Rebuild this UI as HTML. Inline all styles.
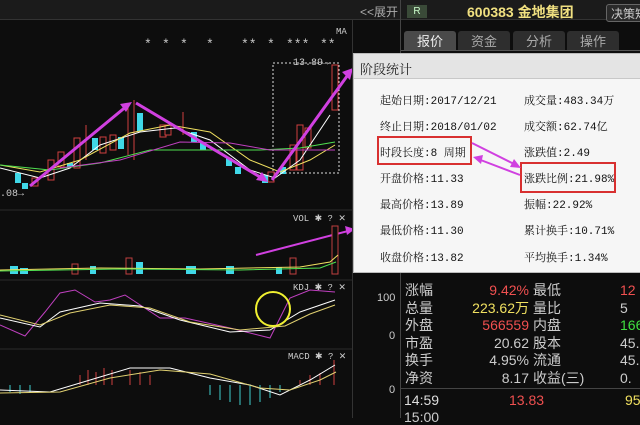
<!DOCTYPE html><html><head><meta charset="utf-8"><style>
*{margin:0;padding:0;box-sizing:border-box}
body{width:640px;height:418px;overflow:hidden;background:#0d0d0d;position:relative;font-family:"Liberation Sans","Noto Sans CJK SC",sans-serif;color:#ddd}
.a{position:absolute;white-space:nowrap}
.pop{position:absolute;left:353px;top:53px;width:290px;height:220px;background:#f6f6f6;border:1px solid #bbb}
.pop .h{height:25px;background:#e4e4e4;border-bottom:1px solid #c8c8c8;font-size:13px;color:#222;padding:5px 6px;font-family:"Liberation Serif","Noto Serif CJK SC",serif}
.pop .t{position:absolute;font-family:"Liberation Mono","Noto Serif CJK SC",monospace;font-size:11px;color:#111;white-space:nowrap}
.rb{position:absolute;border:2px solid #d83030}
.rp{font-size:14px;color:#ccc}
</style></head><body>
<div class="a" style="left:0;top:0;width:640px;height:20px;background:#1b1b1b;border-bottom:1px solid #333"></div>
<div class="a" style="left:352px;top:20px;width:1px;height:398px;background:#333"></div>
<div class="a" style="left:400px;top:0;width:1px;height:418px;background:#444"></div>
<div class="a" style="left:360px;top:3px;font-size:12px;color:#aaa">&lt;&lt;展开</div>
<div class="a" style="left:407px;top:5px;width:20px;height:13px;background:#3a4a38;font-size:10px;color:#cfc;text-align:center;line-height:13px">R</div>
<div class="a" style="left:467px;top:2px;font-size:14px;color:#f0e080;font-weight:bold">600383 金地集团</div>
<div class="a" style="left:606px;top:4px;width:40px;height:18px;border:1px solid #666;border-radius:3px;background:#2a2a2a;font-size:12px;color:#ccc;padding-left:4px">决策矩</div>
<div class="a" style="left:404px;top:31px;width:52px;height:19px;background:#4a4a4a;border-radius:3px 3px 0 0;font-size:13px;color:#eee;text-align:center">报价</div>
<div class="a" style="left:458px;top:31px;width:52px;height:19px;background:#2e2e2e;border-radius:3px 3px 0 0;font-size:13px;color:#aaa;text-align:center">资金</div>
<div class="a" style="left:513px;top:31px;width:52px;height:19px;background:#2e2e2e;border-radius:3px 3px 0 0;font-size:13px;color:#aaa;text-align:center">分析</div>
<div class="a" style="left:567px;top:31px;width:52px;height:19px;background:#2e2e2e;border-radius:3px 3px 0 0;font-size:13px;color:#aaa;text-align:center">操作</div>
<div class="a" style="left:401px;top:50px;width:239px;height:1px;background:#555"></div>

<svg class="a" style="left:0;top:0" width="352" height="418">
<g stroke="#2a2a2a"><line x1="0" y1="210" x2="352" y2="210"/><line x1="0" y1="280" x2="352" y2="280"/><line x1="0" y1="349" x2="352" y2="349"/></g>
<text x="336" y="34" font-size="9" fill="#ccc" font-family="Liberation Mono">MA</text>
<g font-size="13" fill="#ccc" font-family="Liberation Mono"><text x="144" y="48">*</text><text x="162" y="48">*</text><text x="180" y="48">*</text><text x="206" y="48">*</text><text x="241" y="48">**</text><text x="267" y="48">*</text><text x="286" y="48">***</text><text x="320" y="48">**</text></g>
<rect x="273" y="63" width="66" height="110" fill="none" stroke="#ddd" stroke-dasharray="2,2"/>
<text x="293" y="65" font-size="10" fill="#ccc" font-family="Liberation Mono">13.89→</text>
<text x="0" y="196" font-size="10" fill="#ccc" font-family="Liberation Mono">.08→</text>
<g stroke="#d04040" fill="#0d0d0d">
<rect x="32" y="178" width="6" height="8"/><rect x="48" y="160" width="6" height="20"/><rect x="58" y="152" width="6" height="15"/><rect x="74" y="138" width="6" height="30"/><rect x="100" y="137" width="6" height="16"/><rect x="110" y="135" width="6" height="15"/><rect x="160" y="125" width="6" height="12"/><rect x="165" y="125" width="6" height="10"/><rect x="290" y="145" width="6" height="25"/><rect x="297" y="125" width="6" height="45"/><rect x="305" y="128" width="6" height="20"/><rect x="332" y="65" width="6" height="45"/><rect x="268" y="172" width="6" height="10"/>
</g>
<g stroke="#d04040"><line x1="128" y1="105" x2="128" y2="155"/><line x1="134" y1="100" x2="134" y2="160"/><line x1="183" y1="112" x2="183" y2="135"/><line x1="86" y1="125" x2="86" y2="160"/></g>
<g fill="#40d8e8"><rect x="15" y="173" width="6" height="10"/><rect x="22" y="183" width="6" height="6"/><rect x="67" y="163" width="6" height="4"/><rect x="92" y="138" width="6" height="12"/><rect x="118" y="137" width="6" height="12"/><rect x="137" y="113" width="6" height="18"/><rect x="191" y="132" width="6" height="10"/><rect x="200" y="143" width="6" height="7"/><rect x="226" y="158" width="6" height="8"/><rect x="235" y="167" width="6" height="7"/><rect x="262" y="175" width="6" height="8"/><rect x="280" y="167" width="6" height="7"/></g>
<g fill="none" stroke-width="1">
<polyline points="0,168 40,178 70,168 100,145 140,132 175,128 210,140 250,170 275,178 300,160 330,115" stroke="#ffffff"/>
<polyline points="0,165 40,172 80,160 130,133 170,125 210,132 250,160 280,172 310,160 335,145" stroke="#f0e060"/>
<polyline points="0,165 50,170 100,163 150,150 200,150 260,150 300,148 335,142" stroke="#50e050"/>
<polyline points="60,168 120,160 180,142 230,143 270,150 335,150" stroke="#c040c0"/>
</g>
<g stroke="#d040e0" stroke-width="3" fill="none"><line x1="30" y1="186" x2="128" y2="105"/><line x1="136" y1="103" x2="265" y2="180"/><line x1="272" y1="180" x2="350" y2="72"/></g>
<g fill="#d040e0"><polygon points="132,102 120,104 126,112"/><polygon points="268,182 256,180 262,172"/><polygon points="353,68 342,72 350,80"/></g>
<line x1="256" y1="255" x2="352" y2="230" stroke="#d040e0" stroke-width="2"/><polygon points="355,229 345,226 347,235" fill="#d040e0"/>
<text x="293" y="221" font-size="9" fill="#ccc" font-family="Liberation Mono">VOL ✱ ? ✕</text>
<text x="293" y="290" font-size="9" fill="#ccc" font-family="Liberation Mono">KDJ ✱ ? ✕</text>
<text x="288" y="359" font-size="9" fill="#ccc" font-family="Liberation Mono">MACD ✱ ? ✕</text>
<g fill="#0d0d0d" stroke="#c04040"><rect x="332" y="226" width="6" height="48"/><rect x="126" y="258" width="6" height="16"/><rect x="290" y="258" width="6" height="16"/><rect x="72" y="264" width="6" height="10"/></g>
<g fill="#40d8e8"><rect x="10" y="266" width="8" height="8"/><rect x="20" y="268" width="8" height="6"/><rect x="136" y="262" width="7" height="12"/><rect x="90" y="266" width="6" height="8"/><rect x="186" y="266" width="10" height="8"/><rect x="226" y="266" width="8" height="8"/><rect x="276" y="267" width="6" height="7"/></g>
<polyline points="0,270 100,268 200,269 300,267 330,262 338,255" fill="none" stroke="#f0e060"/>
<polyline points="0,271 120,269 240,270 320,268 336,262" fill="none" stroke="#50e050"/>
<polyline points="0,325 25,336 45,312 60,293 75,290 95,302 110,300 125,295 160,318 185,318 230,328 270,338 290,298 310,290 335,292" fill="none" stroke="#c040c0"/>
<polyline points="0,318 40,327 60,312 100,303 140,306 180,320 230,332 270,330 300,312 335,300" fill="none" stroke="#fff"/>
<polyline points="0,315 40,325 70,313 110,305 150,308 190,322 240,330 285,326 310,314 335,305" fill="none" stroke="#e0d070"/>
<ellipse cx="273" cy="309" rx="17" ry="17" fill="none" stroke="#f0f030" stroke-width="2"/>
<g stroke="#d04040"><line x1="80" y1="385" x2="80" y2="375"/><line x1="88" y1="385" x2="88" y2="370"/><line x1="96" y1="385" x2="96" y2="372"/><line x1="104" y1="385" x2="104" y2="368"/><line x1="112" y1="385" x2="112" y2="370"/><line x1="130" y1="385" x2="130" y2="370"/><line x1="140" y1="385" x2="140" y2="372"/><line x1="150" y1="385" x2="150" y2="375"/><line x1="300" y1="385" x2="300" y2="380"/><line x1="310" y1="385" x2="310" y2="375"/><line x1="320" y1="385" x2="320" y2="373"/><line x1="334" y1="385" x2="334" y2="360"/></g>
<g stroke="#40d0d0"><line x1="10" y1="385" x2="10" y2="392"/><line x1="20" y1="385" x2="20" y2="394"/><line x1="30" y1="385" x2="30" y2="392"/><line x1="210" y1="385" x2="210" y2="395"/><line x1="220" y1="385" x2="220" y2="400"/><line x1="230" y1="385" x2="230" y2="402"/><line x1="240" y1="385" x2="240" y2="405"/><line x1="250" y1="385" x2="250" y2="405"/><line x1="260" y1="385" x2="260" y2="402"/><line x1="270" y1="385" x2="270" y2="398"/><line x1="280" y1="385" x2="280" y2="392"/></g>
<polyline points="0,390 50,392 90,380 130,368 170,368 210,378 250,385 280,395 310,380 335,365" fill="none" stroke="#fff"/>
<polyline points="0,393 60,392 110,378 160,370 210,374 260,388 290,390 320,380 336,372" fill="none" stroke="#e0d070"/>
</svg>
<div class="a" style="left:377px;top:292px;font-size:11px;color:#ccc">100</div>
<div class="a" style="left:389px;top:330px;font-size:11px;color:#ccc">0</div>
<div class="a" style="left:389px;top:384px;font-size:11px;color:#ccc">0</div>

<div class="a rp" style="left:405px;top:282px;line-height:17.5px">涨幅<br>总量<br>外盘<br>市盈<br>换手<br>净资</div>
<div class="a rp" style="left:440px;top:282px;width:89px;text-align:right;line-height:17.5px"><span style="color:#f05050">9.42%</span><br><span style="color:#f0e060">223.62万</span><br><span style="color:#f05050">566559</span><br>20.62<br>4.95%<br>8.17</div>
<div class="a rp" style="left:533px;top:282px;line-height:17.5px">最低<br>量比<br>内盘<br>股本<br>流通<br>收益(三)</div>
<div class="a rp" style="left:620px;top:282px;line-height:17.5px"><span style="color:#f05050">12</span><br>5<br><span style="color:#40e040">1669</span><br>45.1<br>45.1<br>0.</div>
<div class="a" style="left:401px;top:388px;width:239px;height:1px;background:#444"></div>
<div class="a rp" style="left:404px;top:392px;color:#ddd">14:59</div>
<div class="a rp" style="left:509px;top:392px;color:#f05050">13.83</div>
<div class="a rp" style="left:625px;top:392px;color:#f0e060">95</div>
<div class="a rp" style="left:404px;top:409px">15:00</div>

<div class="pop"><div class="h">阶段统计</div>
<div class="t" style="left:26px;top:38px">起始日期:2017/12/21</div>
<div class="t" style="left:26px;top:64px">终止日期:2018/01/02</div>
<div class="t" style="left:26px;top:90px">时段长度:8 周期</div>
<div class="t" style="left:26px;top:116px">开盘价格:11.33</div>
<div class="t" style="left:26px;top:142px">最高价格:13.89</div>
<div class="t" style="left:26px;top:168px">最低价格:11.30</div>
<div class="t" style="left:26px;top:195px">收盘价格:13.82</div>
<div class="t" style="left:170px;top:38px">成交量:483.34万</div>
<div class="t" style="left:170px;top:64px">成交额:62.74亿</div>
<div class="t" style="left:170px;top:90px">涨跌值:2.49</div>
<div class="t" style="left:170px;top:116px">涨跌比例:21.98%</div>
<div class="t" style="left:170px;top:142px">振幅:22.92%</div>
<div class="t" style="left:170px;top:168px">累计换手:10.71%</div>
<div class="t" style="left:170px;top:195px">平均换手:1.34%</div>
<div class="rb" style="left:23px;top:82px;width:95px;height:29px"></div>
<div class="rb" style="left:166px;top:108px;width:96px;height:31px"></div>
<svg class="a" style="left:110px;top:85px" width="60" height="40"><line x1="8" y1="4" x2="52" y2="26" stroke="#d040e0" stroke-width="2"/><polygon points="57,29 46,28 50,20" fill="#d040e0"/><line x1="56" y1="36" x2="14" y2="20" stroke="#d040e0" stroke-width="2"/><polygon points="9,18 19,16 17,25" fill="#d040e0"/></svg>
</div>
</body></html>
